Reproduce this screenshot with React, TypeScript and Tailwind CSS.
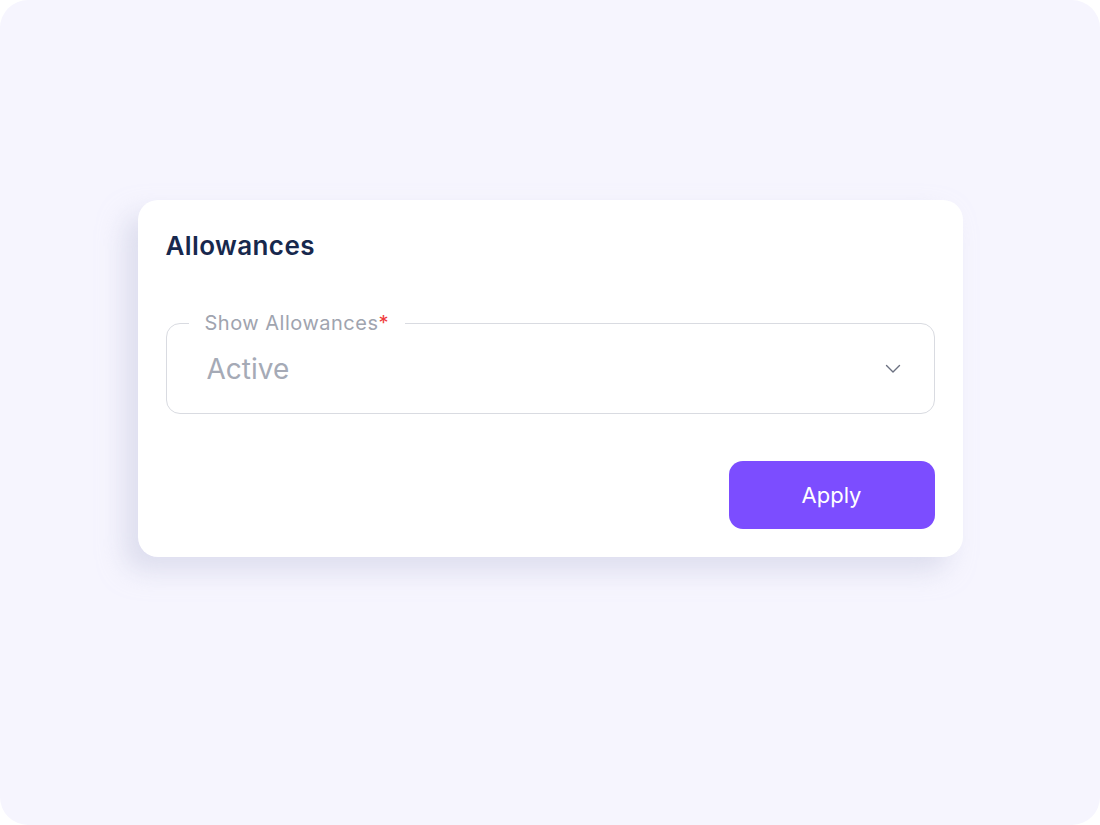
import React from 'react';

const ChevronDown: React.FC = () => (
    <svg width="16" height="10" viewBox="0 0 16 10" fill="none" className="text-[#6b7080]">
        <path d="M1.5 1.5L8 8L14.5 1.5" stroke="currentColor" strokeWidth="1.4" strokeLinecap="round" strokeLinejoin="round" />
    </svg>
);

export default function App() {
    return (
        <div className="w-[1100px] h-[825px] bg-white font-['Inter',sans-serif]">
            <div className="w-full h-full rounded-[28px] bg-[#f6f5fe] flex justify-center pt-[200px]">
                <div className="w-[825px] h-[357px] bg-white rounded-[20px] px-[28px] pt-[28px] pb-[28px] flex flex-col shadow-[-14px_14px_26px_rgba(205,206,228,0.6)]">
                    <h2 className="text-[26px] leading-[36px] font-semibold text-[#17284d] tracking-[0.4px]">Allowances</h2>

                    <div className="relative mt-[59px] h-[92px] border border-[#d9dbe1] rounded-[14px] flex items-center justify-between pl-[40px] pr-[33px]">
                        <span className="absolute -top-[13px] left-[22px] bg-white px-[16px] text-[20px] leading-[24px] tracking-[0.5px] text-[#a0a4af]">
                            Show Allowances<span className="text-[#ef3b3b]">*</span>
                        </span>
                        <span className="text-[28px] leading-[34px] text-[#a5aab6]">Active</span>
                        <ChevronDown />
                    </div>

                    <div className="flex justify-end mt-[47px]">
                        <button className="w-[206px] h-[68px] rounded-[14px] bg-[#7c4dff] text-white text-[22px] leading-none">
                            Apply
                        </button>
                    </div>
                </div>
            </div>
        </div>
    );
}
